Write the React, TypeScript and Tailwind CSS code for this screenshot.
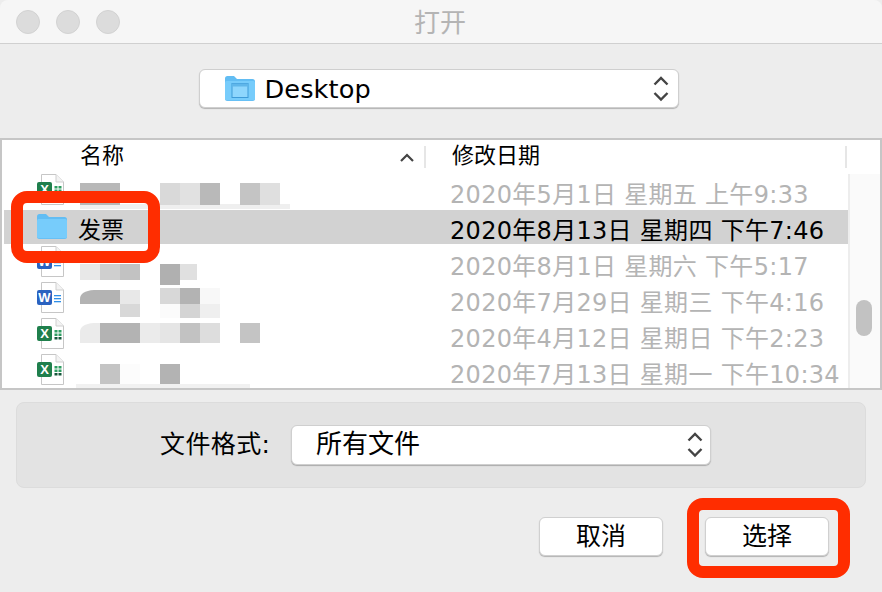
const files = [
  { kind: 'excel', name: '', date: '2020年5月1日 星期五 上午9:33' },
  { kind: 'folder', name: '发票', date: '2020年8月13日 星期四 下午7:46' },
  { kind: 'word', name: '', date: '2020年8月1日 星期六 下午5:17' },
  { kind: 'word', name: '', date: '2020年7月29日 星期三 下午4:16' },
  { kind: 'excel', name: '', date: '2020年4月12日 星期日 下午2:23' },
  { kind: 'excel', name: '', date: '2020年7月13日 星期一 下午10:34' }
]

// x, y (relative to list body top), w, h, colour of the pixelated file names
const mosaic: [number, number, number, number, string][] = [
  [80, 30, 210, 5, '#efefef'],
  [80, 9, 40, 22, '#b8b8b8'],
  [160, 9, 20, 22, '#d9d9d9'],
  [180, 9, 20, 22, '#e1e1e1'],
  [200, 9, 20, 22, '#b9b9b9'],
  [240, 9, 20, 22, '#c4c4c4'],
  [260, 9, 20, 22, '#dfdfdf'],
  [80, 90, 20, 16, '#e8e8e8'],
  [100, 90, 20, 16, '#cfcfcf'],
  [120, 90, 20, 16, '#c2c2c2'],
  [160, 90, 20, 21, '#b0b0b0'],
  [180, 90, 17, 16, '#e0e0e0'],
  [80, 116, 40, 14, '#b3b3b3'],
  [120, 116, 20, 14, '#e8e8e8'],
  [160, 114, 20, 16, '#d8d8d8'],
  [180, 114, 20, 16, '#b3b3b3'],
  [200, 114, 20, 16, '#f8f8f8'],
  [120, 130, 20, 13, '#d8d8d8'],
  [160, 130, 20, 14, '#fbfbfb'],
  [180, 130, 20, 14, '#d4d4d4'],
  [200, 130, 20, 14, '#efefef'],
  [80, 149, 20, 20, '#ebebeb'],
  [100, 149, 40, 20, '#b3b3b3'],
  [140, 149, 20, 20, '#ebebeb'],
  [160, 149, 20, 20, '#e5e5e5'],
  [180, 149, 20, 20, '#c2c2c2'],
  [200, 149, 20, 20, '#dddddd'],
  [240, 149, 20, 20, '#c4c4c4'],
  [100, 190, 20, 20, '#c4c4c4'],
  [120, 190, 20, 20, '#fcfcfc'],
  [160, 190, 20, 20, '#b3b3b3'],
  [76, 210, 174, 4, '#f1f1f1']
]

function FolderIcon({ window: hasWindow }: { window?: boolean }): JSX.Element {
  return (
    <svg width="30" height="25" viewBox="0 0 30 25">
      <path d="M0 2.5Q0 0 2.5 0H9L12 3H27.5Q30 3 30 5.5V22.5Q30 25 27.5 25H2.5Q0 25 0 22.5Z" fill="#62bdf3" />
      <path d="M0 6.5Q0 5 1.5 5H28.5Q30 5 30 6.5V22.5Q30 24.2 28 24.2H2Q0 24.2 0 22.5Z" fill="#77ccfb" />
      {hasWindow && (
        <g>
          <rect x="7" y="7.5" width="16" height="14" fill="#8ed6fd" stroke="#3f9bd8" strokeWidth="1" />
          <rect x="7" y="7.5" width="16" height="3" fill="#5fb6ea" />
        </g>
      )}
    </svg>
  )
}

function DocIcon({ kind }: { kind: string }): JSX.Element {
  const excel = kind === 'excel'
  return (
    <div className="relative w-[31px] h-[32px]">
      <svg className="absolute left-0 top-0" width="31" height="32" viewBox="0 0 31 32">
        <path d="M4.5 0.5H19L26.5 8V30.5H4.5Z" fill="#ffffff" stroke="#c6c6c6" />
        <path d="M19 0.5V8H26.5" fill="#f3f3f3" stroke="#cfcfcf" />
        {excel ? (
          <g>
            <rect x="17.5" y="12" width="3" height="2.5" fill="#2f9e62" />
            <rect x="21.5" y="12" width="3" height="2.5" fill="#2f9e62" />
            <rect x="17.5" y="15.5" width="3" height="2.5" fill="#2f9e62" />
            <rect x="21.5" y="15.5" width="3" height="2.5" fill="#2f9e62" />
            <rect x="17.5" y="19" width="3" height="2.5" fill="#14573a" />
            <rect x="21.5" y="19" width="3" height="2.5" fill="#14573a" />
          </g>
        ) : (
          <g fill="#2f8fe8">
            <rect x="17" y="13" width="7" height="1.3" />
            <rect x="17" y="16" width="7" height="1.3" />
            <rect x="17" y="19" width="7" height="1.3" />
          </g>
        )}
      </svg>
      <div
        className={`absolute left-0 top-[8px] w-[15px] h-[15px] rounded-[2px] flex items-center justify-center text-white text-[13px] font-bold font-['Liberation_Sans',sans-serif] ${excel ? 'bg-[#1f7f4c]' : 'bg-[#2a62c0]'}`}
      >
        {excel ? 'X' : 'W'}
      </div>
    </div>
  )
}

function Chevrons(): JSX.Element {
  return (
    <svg width="16" height="26" viewBox="0 0 16 26" fill="none" stroke="#444444" strokeWidth="2.4">
      <path d="M1.5 8.5L8 2L14.5 8.5" />
      <path d="M1.5 17L8 23.5L14.5 17" />
    </svg>
  )
}

function App(): JSX.Element {
  return (
    <div className="relative w-[882px] h-[592px] overflow-hidden bg-[#ededed] font-['DejaVu_Sans','Noto_Sans_CJK_SC',sans-serif] text-black">
      {/* title bar */}
      <div className="h-[44px] bg-[#f6f6f6] border-b border-[#d0d0d0] rounded-t-[8px] flex items-center relative">
        <div className="flex gap-[16px] pl-[16px]">
          <div className="w-[24px] h-[24px] rounded-full bg-[#dcdcdc] border border-[#d2d2d2]"></div>
          <div className="w-[24px] h-[24px] rounded-full bg-[#dcdcdc] border border-[#d2d2d2]"></div>
          <div className="w-[24px] h-[24px] rounded-full bg-[#dcdcdc] border border-[#d2d2d2]"></div>
        </div>
        <p className="absolute inset-x-0 top-[7px] pr-[2px] text-center text-[26px] leading-[32px] text-[#b4b4b4]">打开</p>
      </div>

      {/* location */}
      <div className="flex justify-center pt-[25px]">
        <div className="ml-[-5px] w-[480px] h-[39px] bg-white rounded-[6px] border border-[#cfcfcf] shadow-[0_1px_1px_rgba(0,0,0,0.25)] flex items-center pl-[25px] pr-[9px]">
          <FolderIcon window />
          <span className="ml-[10px] text-[25.6px] leading-none grow pt-[3px] tracking-[0.1px]">Desktop</span>
          <Chevrons />
        </div>
      </div>

      {/* file list */}
      <div className="relative mt-[30px] h-[252px] bg-white border-2 border-[#c6c6c6] overflow-hidden">
        <div className="h-[34px] flex items-center text-[22px] relative">
          <span className="ml-[78px] w-[319px] leading-none pb-[2px]">名称</span>
          <svg width="16" height="9" viewBox="0 0 16 9" fill="none" stroke="#444444" strokeWidth="2.2">
            <path d="M2 8L8 2L14 8" />
          </svg>
          <div className="ml-[9px] w-[2px] h-[22px] bg-[#e6e6e6]"></div>
          <span className="ml-[26px] w-[393px] leading-none pb-[2px]">修改日期</span>
          <div className="w-[2px] h-[22px] bg-[#e6e6e6]"></div>
        </div>
        <div className="flex">
          <div className="w-[846px] pl-[2px] flex flex-col gap-[2px]">
            {files.map((file) => (
              <div
                key={file.date}
                className={`h-[34px] grid grid-cols-[74px_372px_1fr] items-start whitespace-nowrap overflow-hidden ${file.kind === 'folder' ? 'bg-[#d2d2d2]' : ''}`}
              >
                <div className="pl-[33px]">
                  {file.kind === 'folder' ? (
                    <div className="pt-[4px]">
                      <FolderIcon />
                    </div>
                  ) : (
                    <DocIcon kind={file.kind} />
                  )}
                </div>
                <span className="text-[23px] leading-[34px] mt-[3px]">{file.name}</span>
                <span
                  className={`text-[24px] leading-[43px] tracking-[0.3px] ${file.kind === 'folder' ? 'text-black' : 'text-[#b4b4b4]'}`}
                >
                  {file.date}
                </span>
              </div>
            ))}
          </div>
          <div className="w-[32px] h-[214px] bg-[#fafafa] border-l-2 border-[#ededed] pl-[6px] pt-[126px]">
            <div className="w-[16px] h-[36px] rounded-full bg-[#c2c2c2]"></div>
          </div>
        </div>
        <svg className="absolute left-[-2px] top-[34px]" width="300" height="216" viewBox="0 0 300 216">
          {mosaic.map(([x, y, w, h, fill]) => (
            <rect key={`${x}-${y}`} x={x} y={y} width={w} height={h} fill={fill} />
          ))}
          <path d="M80 116H94Q80 117 80 125Z" fill="#ffffff" />
          <path d="M80 149H94Q80 150 80 158Z" fill="#ffffff" />
        </svg>
      </div>

      {/* format */}
      <div className="mx-[16px] mt-[12px] h-[86px] bg-[#e3e3e3] border border-[#dcdcdc] rounded-[8px] flex items-center pl-[143px]">
        <span className="text-[25px] w-[131px] tracking-[0.4px]">文件格式:</span>
        <div className="w-[420px] h-[40px] bg-white rounded-[6px] border border-[#cfcfcf] shadow-[0_1px_1px_rgba(0,0,0,0.25)] flex items-center pl-[24px] pr-[7px]">
          <span className="text-[26px] leading-none grow pb-[3px]">所有文件</span>
          <Chevrons />
        </div>
      </div>

      {/* buttons */}
      <div className="flex justify-end gap-[42px] pt-[29px] pr-[53px]">
        <button className="w-[124px] h-[39px] bg-white rounded-[6px] border border-[#d0d0d0] shadow-[0_1px_1px_rgba(0,0,0,0.25)] text-[25px] leading-none">
          取消
        </button>
        <button className="w-[124px] h-[39px] bg-white rounded-[6px] border border-[#d0d0d0] shadow-[0_1px_1px_rgba(0,0,0,0.25)] text-[25px] leading-none">
          选择
        </button>
      </div>

      {/* red annotation boxes */}
      <div className="absolute left-[11px] top-[191px] w-[149px] h-[72px] border-[12px] border-[#ff2d00] rounded-[16px]"></div>
      <div className="absolute left-[687px] top-[498px] w-[163px] h-[80px] border-[12px] border-[#ff2d00] rounded-[16px]"></div>
    </div>
  )
}

export default App
